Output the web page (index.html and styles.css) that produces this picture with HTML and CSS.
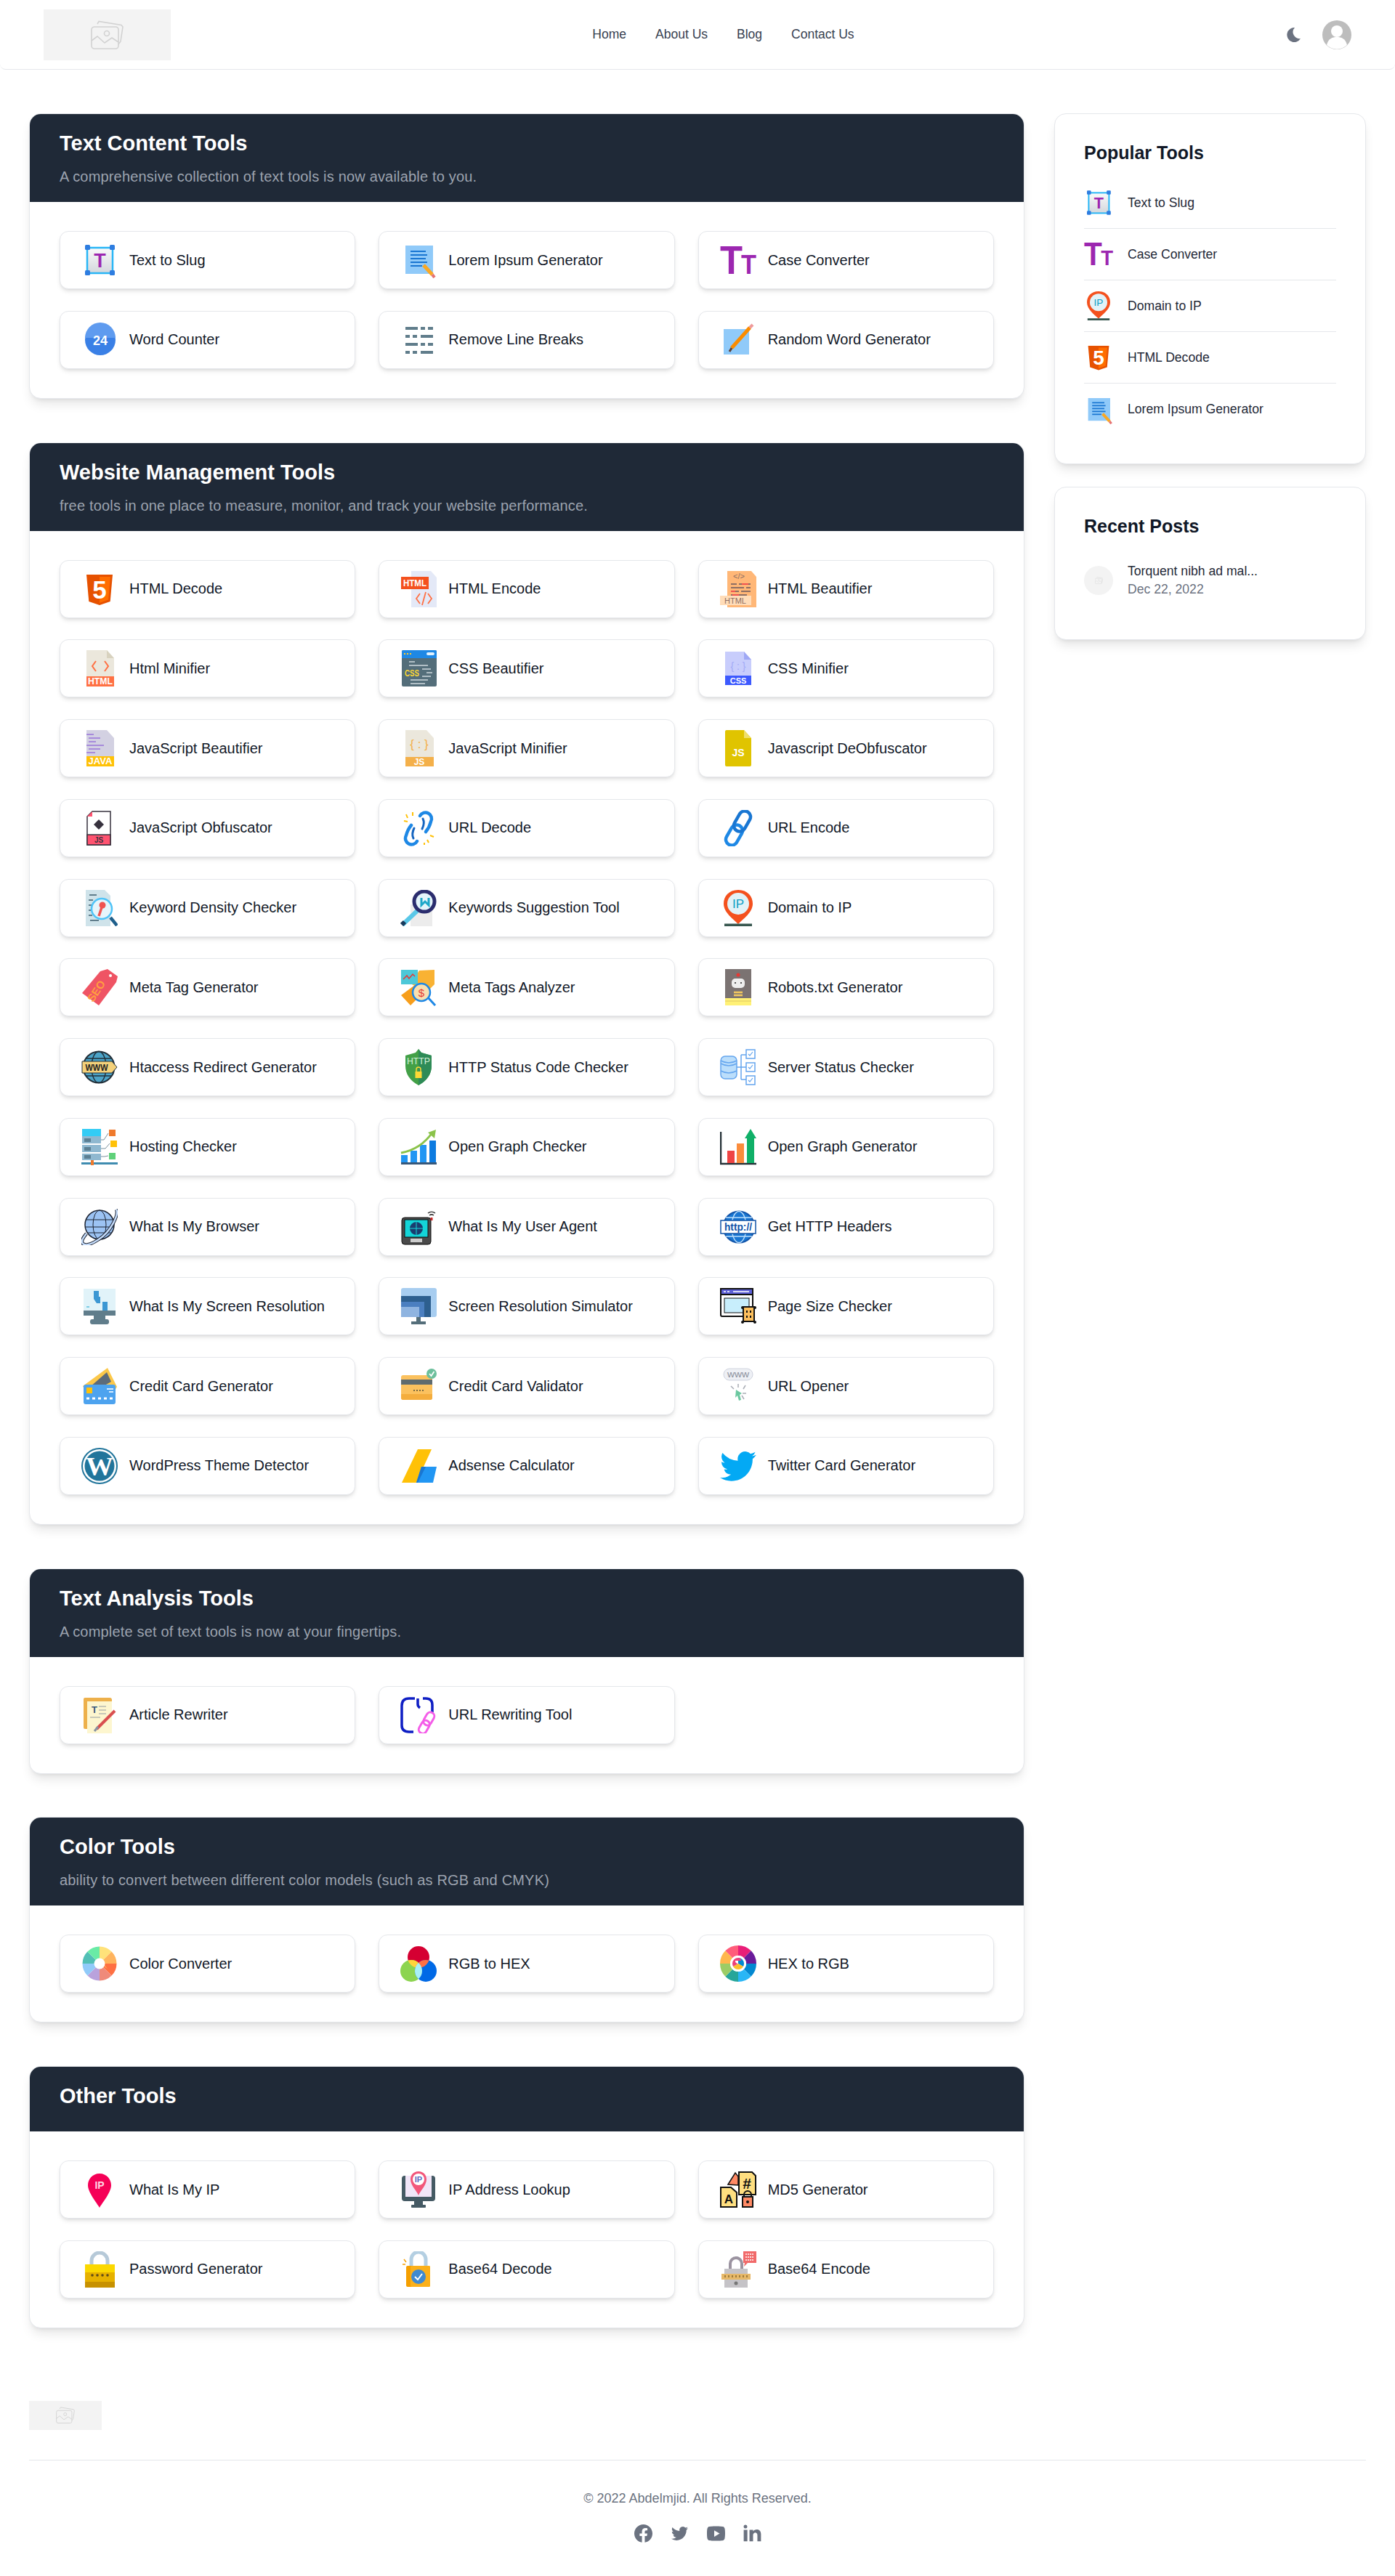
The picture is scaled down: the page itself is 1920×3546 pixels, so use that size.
FILE: index.html
```html
<!DOCTYPE html>
<html lang="en">
<head>
  <meta charset="UTF-8" />
  <title>Online Web Tools</title>
  <link rel="stylesheet" href="styles.css">
</head>
<body>

  <!-- Shared icons (the ones with lettering are written inline below) -->
  <svg class="sprite" aria-hidden="true">
    <defs>
      <linearGradient id="g-slug" x1="0" y1="0" x2="0" y2="1"><stop offset="0" stop-color="#fafafa"/><stop offset="1" stop-color="#d3d7dc"/></linearGradient>
      <clipPath id="c-red"><circle cx="25" cy="16" r="15"/></clipPath>
      <clipPath id="c-green"><circle cx="15" cy="35" r="15"/></clipPath>
    </defs>

    <symbol id="i-photo" viewBox="0 0 45 40">
      <g fill="none" stroke="#d2d2d2" stroke-width="1.6">
        <path d="M9 5 11 1.500 42 6.500 44 9 41 29 38 33"/>
        <rect x="1" y="9" width="37" height="30" rx="4"/>
        <circle cx="22" cy="18" r="3.500"/>
        <path d="M1 28 9 22 19 31 29 24 38 30"/>
      </g>
    </symbol>

    <symbol id="i-lorem" viewBox="0 0 50 50">
      <rect x="7" y="5" width="38" height="39" fill="#90caf9"/>
      <path d="M14 13h21M14 18h23M14 23h21M14 28h23M14 33h16" stroke="#1976d2" stroke-width="2.200"/>
      <path d="M32 32 44 45" stroke="#f9a825" stroke-width="5"/>
      <path d="M44 45 47 49" stroke="#e57373" stroke-width="4"/>
    </symbol>

    <symbol id="i-random" viewBox="0 0 50 50">
      <rect x="5" y="10" width="35" height="35" fill="#90caf9"/>
      <path d="M16 36 41 8" stroke="#fb8c00" stroke-width="5"/>
      <path d="M41 8 45 4" stroke="#ef9a9a" stroke-width="4"/>
      <path d="M16 36 13 41" stroke="#5d4037" stroke-width="3"/>
    </symbol>

    <symbol id="i-breaks" viewBox="0 0 50 50">
      <g fill="#607d8b">
        <rect x="7" y="7" width="17" height="4"/><rect x="28" y="7" width="6" height="4"/><rect x="38" y="7" width="7" height="4"/>
        <rect x="7" y="18" width="6" height="4"/><rect x="17" y="18" width="6" height="4"/><rect x="28" y="18" width="17" height="4"/>
        <rect x="7" y="29" width="17" height="4"/><rect x="28" y="29" width="6" height="4"/><rect x="38" y="29" width="7" height="4"/>
        <rect x="7" y="40" width="6" height="4"/><rect x="17" y="40" width="6" height="4"/><rect x="28" y="40" width="17" height="4"/>
      </g>
    </symbol>

    <symbol id="i-url-dec" viewBox="0 0 50 50">
      <g fill="none" stroke="#1e88e5" stroke-width="4.500" stroke-linecap="round">
        <path d="M27 8a8 8 0 0 1 15 8q-2 8-7 14"/>
        <path d="M23 43a8 8 0 0 1-15-8q2-8 7-14"/>
        <path d="M19 25q-4 8-1 14M30 26q4-8 1-14" stroke="#1565c0" stroke-width="3"/>
      </g>
      <path d="M8 6l2 5M17 3v5M5 15l5 1M41 35l5 2M37 41l2 4M33 45v3" stroke="#ffc107" stroke-width="2"/>
    </symbol>

    <symbol id="i-url-enc" viewBox="0 0 50 50">
      <g fill="none" stroke="#1e88e5" stroke-width="4.500" transform="rotate(-60 25 25)">
        <rect x="-1" y="17" width="30" height="16" rx="8"/>
        <rect x="21" y="17" width="30" height="16" rx="8" stroke="#1976d2"/>
      </g>
    </symbol>

    <symbol id="i-density" viewBox="0 0 50 50">
      <path d="M6 0h26l8 8v42H6z" fill="#cfe3ea"/>
      <path d="M11 7h10M10 14h6M10 21h4M10 28h4M10 35h5M12 42h12" stroke="#607d8b" stroke-width="2"/>
      <circle cx="28" cy="26" r="14" fill="#e6f5fb" stroke="#4fc3f7" stroke-width="2.500"/>
      <circle cx="29" cy="21" r="4.500" fill="#ef5350"/>
      <path d="M28 24 24 36" stroke="#ef5350" stroke-width="3.500"/>
      <path d="M40 38 49 49" stroke="#1f5f8b" stroke-width="4.500"/>
    </symbol>

    <symbol id="i-suggest" viewBox="0 0 50 50">
      <rect x="14" y="20" width="30" height="30" fill="#ececec"/>
      <path d="M24 28 3 48" stroke="#5ac8e8" stroke-width="6"/>
      <path d="M6 44 2 48" stroke="#1a3a5c" stroke-width="6"/>
      <circle cx="33" cy="16" r="14" fill="#e4f4fa" stroke="#2b2d6e" stroke-width="5"/>
      <path d="M29 11v10l5-5 5 5V11" fill="none" stroke="#1ea7c9" stroke-width="3"/>
    </symbol>

    <symbol id="i-robots" viewBox="0 0 50 50">
      <rect x="7" y="0" width="36" height="44" fill="#7b7372"/>
      <path d="M7 40h36v10H7z" fill="#fff176"/>
      <path d="M7 44h36" stroke="#e0c860" stroke-width="1"/>
      <circle cx="25" cy="8" r="2.500" fill="#e53935"/>
      <rect x="16" y="13" width="18" height="13" rx="5" fill="#eeeeee"/>
      <path d="M20 19h2M28 19h2" stroke="#555" stroke-width="2"/>
      <path d="M19 32h12M19 36h12" stroke="#f3c95f" stroke-width="2.500"/>
    </symbol>

    <symbol id="i-server" viewBox="0 0 50 50">
      <g fill="#bbdefb" stroke="#64a5ee" stroke-width="1.500">
        <rect x="1" y="10" width="22" height="31" rx="6"/>
      </g>
      <path d="M1 20q11 6 22 0M1 30q11 6 22 0M1 16q11 6 22 0" fill="none" stroke="#64a5ee" stroke-width="1.500"/>
      <path d="M23 25h6M29 8v34M29 8h7M29 25h7M29 42h7" fill="none" stroke="#64a5ee" stroke-width="1.500"/>
      <g fill="#fff" stroke="#64a5ee" stroke-width="1.500">
        <rect x="36" y="1" width="12" height="12"/><rect x="36" y="19" width="12" height="12"/><rect x="36" y="37" width="12" height="12"/>
      </g>
      <path d="M39 7l2 2 4-5M39 25l2 2 4-5M39 43l2 2 4-5" fill="none" stroke="#64a5ee" stroke-width="1.200"/>
    </symbol>

    <symbol id="i-hosting" viewBox="0 0 50 50">
      <rect x="1" y="0" width="26" height="10" fill="#33ccf5"/>
      <g fill="#8fb8d0"><rect x="1" y="10" width="26" height="10"/><rect x="1" y="22" width="26" height="10"/><rect x="1" y="34" width="26" height="9"/></g>
      <g fill="#5b7f93"><rect x="4" y="13" width="9" height="5"/><rect x="4" y="25" width="9" height="5"/><rect x="4" y="36" width="9" height="5"/></g>
      <rect x="38" y="1" width="9" height="9" fill="#ef7a2d"/>
      <rect x="40" y="16" width="9" height="9" fill="#ffc107"/>
      <rect x="38" y="33" width="9" height="9" fill="#5fd17a"/>
      <path d="M27 15h4l6-9M27 27h6l6-7M27 38h5l5-1" fill="none" stroke="#78909c" stroke-width="1"/>
      <rect x="0" y="46" width="50" height="3" fill="#3f8cb0"/>
      <rect x="13" y="43" width="4" height="7" fill="#ef7a2d"/>
    </symbol>

    <symbol id="i-og-check" viewBox="0 0 50 50">
      <rect x="1" y="36" width="9" height="11" fill="#2196f3"/>
      <rect x="14" y="30" width="9" height="17" fill="#2196f3"/>
      <rect x="27" y="22" width="9" height="25" fill="#2196f3"/>
      <rect x="40" y="16" width="9" height="31" fill="#0d7be0"/>
      <rect x="1" y="46" width="49" height="3" fill="#37587a"/>
      <path d="M1 33Q28 28 44 5" fill="none" stroke="#8bc34a" stroke-width="3"/>
      <path d="M38 5 49 1 47 13z" fill="#8bc34a"/>
    </symbol>

    <symbol id="i-og-gen" viewBox="0 0 50 50">
      <path d="M1 4v44h49" fill="none" stroke="#263238" stroke-width="2.500"/>
      <rect x="10" y="30" width="10" height="17" fill="#ef4444"/>
      <rect x="23" y="20" width="10" height="27" fill="#fb8c3c"/>
      <rect x="37" y="12" width="10" height="35" fill="#10b068"/>
      <path d="M42 0l8 13H34z" fill="#10b068"/>
    </symbol>

    <symbol id="i-browser" viewBox="0 0 50 50">
      <circle cx="25" cy="22" r="20" fill="#9cc3f3" stroke="#1d2433" stroke-width="1.500"/>
      <ellipse cx="25" cy="22" rx="9" ry="20" fill="none" stroke="#1d2433"/>
      <path d="M6 15h38M5 25h40M8 33h34" stroke="#1d2433"/>
      <path d="M48 1C52 8 40 32 24 42 12 50 3 52 1 46c-1-3 2-7 6-12" fill="none" stroke="#1d2433" stroke-width="4.500"/>
      <path d="M48 1C52 8 40 32 24 42 12 50 3 52 1 46c-1-3 2-7 6-12" fill="none" stroke="#c5dcfa" stroke-width="2.500"/>
    </symbol>

    <symbol id="i-ua" viewBox="0 0 50 50">
      <rect x="2" y="12" width="40" height="37" rx="4" fill="#4a4a4a" stroke="#111"/>
      <rect x="6" y="15" width="32" height="24" fill="#14d5d8" stroke="#111"/>
      <circle cx="22" cy="27" r="9" fill="#1a3d6e"/>
      <path d="M13 27h18M22 18v18" stroke="#14d5d8"/>
      <rect x="14" y="41" width="16" height="5" fill="#ccc"/>
      <path d="M38 6a8 8 0 0 1 10 0M40 9a5 5 0 0 1 6 0" fill="none" stroke="#333" stroke-width="1.500"/>
      <path d="M43 12v4" stroke="#c62828" stroke-width="3"/>
    </symbol>

    <symbol id="i-res" viewBox="0 0 50 50">
      <rect x="3" y="1" width="44" height="30" fill="#e1f3f9"/>
      <path d="M17 4h7v8h2v9h-5l-4-6z" fill="#3c97d3"/>
      <path d="M29 19h7v12h-7z" fill="#3c97d3"/>
      <path d="M7 26h4" stroke="#5bc0de" stroke-width="1.500"/>
      <rect x="3" y="31" width="44" height="7" fill="#607d8b"/>
      <rect x="17" y="38" width="16" height="5" fill="#607d8b"/>
      <rect x="12" y="43" width="26" height="7" rx="3" fill="#607d8b"/>
    </symbol>

    <symbol id="i-sim" viewBox="0 0 50 50">
      <rect x="1" y="0" width="49" height="40" rx="3" fill="#a7cdf0"/>
      <rect x="1" y="11" width="41" height="29" fill="#2d5f8f"/>
      <rect x="1" y="19" width="32" height="21" fill="#4b7fc0"/>
      <rect x="1" y="26" width="25" height="14" fill="#8fb4e0"/>
      <rect x="22" y="40" width="6" height="6" fill="#546e7a"/>
      <rect x="15" y="46" width="20" height="4" fill="#546e7a"/>
    </symbol>

    <symbol id="i-pagesize" viewBox="0 0 50 50">
      <rect x="1" y="1" width="44" height="38" rx="2" fill="#fff" stroke="#111" stroke-width="2"/>
      <rect x="1" y="1" width="44" height="8" fill="#5c5fd6" stroke="#111" stroke-width="2"/>
      <path d="M5 5h3M10 5h3M18 5h22" stroke="#fff" stroke-width="1.500"/>
      <rect x="6" y="14" width="34" height="20" fill="#c8eefc" stroke="#111"/>
      <rect x="32" y="26" width="15" height="20" fill="#fbbf5d" stroke="#111" stroke-width="2"/>
      <path d="M37 31v3M42 31v3M37 38v3M42 38v3" stroke="#111" stroke-width="2"/>
      <g fill="#111"><circle cx="31" cy="27" r="2"/><circle cx="48" cy="27" r="2"/><circle cx="31" cy="47" r="2"/><circle cx="48" cy="47" r="2"/></g>
    </symbol>

    <symbol id="i-cc-gen" viewBox="0 0 50 50">
      <path d="M2 25 36 0l13 26-3 5H5z" fill="#fcc84a"/>
      <path d="M12 26 35 6l6 13-16 9z" fill="#5d6b7a"/>
      <rect x="3" y="23" width="44" height="27" rx="3" fill="#4da3ef"/>
      <rect x="7" y="27" width="8" height="8" fill="#ffc107"/>
      <path d="M35 29h9M38 33h6" stroke="#d6ecff" stroke-width="2"/>
      <path d="M7 42h4M15 42h4M23 42h4M31 42h4M39 42h4" stroke="#fff" stroke-width="3"/>
    </symbol>

    <symbol id="i-cc-val" viewBox="0 0 50 50">
      <rect x="1" y="10" width="43" height="34" rx="3" fill="#fbc15e"/>
      <rect x="1" y="16" width="43" height="7" fill="#5f6b6e"/>
      <path d="M1 36h43v5q0 3-3 3H4q-3 0-3-3z" fill="#f4ad3d"/>
      <path d="M18 31h2M22 31h2M26 31h2M30 31h2" stroke="#7b6a40" stroke-width="2"/>
      <circle cx="43" cy="8" r="7" fill="#6cbf9c"/>
      <path d="M40 8l2.500 3 4-6" fill="none" stroke="#fff" stroke-width="1.800"/>
    </symbol>

    <symbol id="i-adsense" viewBox="0 0 50 50">
      <path d="M24 2h19L22 48H2z" fill="#ffc107"/>
      <path d="M29 26h21l-5 22H22z" fill="#2196f3"/>
      <path d="M29 26h6L24 48h-2z" fill="#1976d2"/>
    </symbol>

    <symbol id="i-twitter" viewBox="0 0 50 50">
      <path transform="translate(-4.400 -4) scale(2.450)" fill="#03a9f4" d="M22.162 5.656a8.384 8.384 0 0 1-2.402.658A4.196 4.196 0 0 0 21.6 4c-.82.488-1.719.83-2.656 1.015a4.182 4.182 0 0 0-7.126 3.814 11.874 11.874 0 0 1-8.62-4.37 4.168 4.168 0 0 0-.566 2.103c0 1.45.738 2.731 1.86 3.481a4.168 4.168 0 0 1-1.894-.523v.052a4.185 4.185 0 0 0 3.355 4.101 4.21 4.21 0 0 1-1.89.072A4.185 4.185 0 0 0 7.970 16.650a8.394 8.394 0 0 1-6.191 1.732 11.830 11.830 0 0 0 6.410 1.880c7.693 0 11.900-6.373 11.900-11.900 0-.180-.005-.362-.013-.540a8.496 8.496 0 0 0 2.087-2.165z"/>
    </symbol>

    <symbol id="i-url-rw" viewBox="0 0 50 50">
      <path d="M20 2h-8Q2 2 2 12v27q0 9 10 9h6M31 2h4q9 0 9 9v10M24 2v8q0 3 3 5" fill="none" stroke="#0e1ec4" stroke-width="3.500"/>
      <g fill="none" stroke="#f45de8" stroke-width="3" transform="rotate(-60 37 35)">
        <rect x="20" y="29" width="19" height="11" rx="5.500"/>
        <rect x="33" y="29" width="19" height="11" rx="5.500"/>
      </g>
    </symbol>

    <symbol id="i-color" viewBox="0 0 50 50">
      <g fill="none" stroke-width="16">
        <circle cx="25" cy="25" r="15.500" pathLength="8" stroke="#ff7043" stroke-dasharray="1 7"/>
        <circle cx="25" cy="25" r="15.500" pathLength="8" stroke="#ef8a7a" stroke-dasharray="1 7" stroke-dashoffset="-1"/>
        <circle cx="25" cy="25" r="15.500" pathLength="8" stroke="#b9a2dc" stroke-dasharray="1 7" stroke-dashoffset="-2"/>
        <circle cx="25" cy="25" r="15.500" pathLength="8" stroke="#90caf9" stroke-dasharray="1 7" stroke-dashoffset="-3"/>
        <circle cx="25" cy="25" r="15.500" pathLength="8" stroke="#52bfb5" stroke-dasharray="1 7" stroke-dashoffset="-4"/>
        <circle cx="25" cy="25" r="15.500" pathLength="8" stroke="#69eba6" stroke-dasharray="1 7" stroke-dashoffset="-5"/>
        <circle cx="25" cy="25" r="15.500" pathLength="8" stroke="#ffe27a" stroke-dasharray="1 7" stroke-dashoffset="-6"/>
        <circle cx="25" cy="25" r="15.500" pathLength="8" stroke="#ffb45e" stroke-dasharray="1 7" stroke-dashoffset="-7"/>
      </g>
    </symbol>

    <symbol id="i-rgb" viewBox="0 0 50 50">
      <circle cx="25" cy="16" r="15" fill="#d50032"/>
      <circle cx="15" cy="35" r="15" fill="#8cd44f"/>
      <circle cx="35" cy="35" r="15" fill="#0069e6"/>
      <circle cx="15" cy="35" r="15" fill="#ffd43b" clip-path="url(#c-red)"/>
      <circle cx="35" cy="35" r="15" fill="#ff7043" clip-path="url(#c-red)"/>
      <circle cx="35" cy="35" r="15" fill="#a8f0f5" clip-path="url(#c-green)"/>
    </symbol>

    <symbol id="i-hex" viewBox="0 0 50 50">
      <g fill="none" stroke-width="14">
        <circle cx="25" cy="25" r="18" pathLength="8" stroke="#0288d1" stroke-dasharray="1 7"/>
        <circle cx="25" cy="25" r="18" pathLength="8" stroke="#29b6f6" stroke-dasharray="1 7" stroke-dashoffset="-1"/>
        <circle cx="25" cy="25" r="18" pathLength="8" stroke="#26a69a" stroke-dasharray="1 7" stroke-dashoffset="-2"/>
        <circle cx="25" cy="25" r="18" pathLength="8" stroke="#9ccc65" stroke-dasharray="1 7" stroke-dashoffset="-3"/>
        <circle cx="25" cy="25" r="18" pathLength="8" stroke="#ffb74d" stroke-dasharray="1 7" stroke-dashoffset="-4"/>
        <circle cx="25" cy="25" r="18" pathLength="8" stroke="#ff5c7a" stroke-dasharray="1 7" stroke-dashoffset="-5"/>
        <circle cx="25" cy="25" r="18" pathLength="8" stroke="#e91e78" stroke-dasharray="1 7" stroke-dashoffset="-6"/>
        <circle cx="25" cy="25" r="18" pathLength="8" stroke="#6a1b9a" stroke-dasharray="1 7" stroke-dashoffset="-7"/>
      </g>
      <circle cx="25" cy="25" r="11" fill="#fff"/>
      <g fill="none" stroke-width="8">
        <circle cx="25" cy="25" r="4" pathLength="3" stroke="#0288d1" stroke-dasharray="1 2" stroke-dashoffset="0.750"/>
        <circle cx="25" cy="25" r="4" pathLength="3" stroke="#fbc02d" stroke-dasharray="1 2" stroke-dashoffset="-0.250"/>
        <circle cx="25" cy="25" r="4" pathLength="3" stroke="#ec407a" stroke-dasharray="1 2" stroke-dashoffset="-1.250"/>
      </g>
    </symbol>

    <symbol id="i-pass" viewBox="0 0 50 50">
      <path d="M14 20V13a11 11 0 0 1 22 0v7" fill="none" stroke="#b6c9d8" stroke-width="5"/>
      <rect x="5" y="18" width="41" height="32" fill="#e6b100"/>
      <rect x="5" y="18" width="41" height="11" fill="#fbd800"/>
      <rect x="5" y="42" width="41" height="8" fill="#c79100"/>
      <g fill="#5d4a17"><circle cx="15" cy="33" r="1.800"/><circle cx="22" cy="33" r="1.800"/><circle cx="29" cy="33" r="1.800"/><circle cx="36" cy="33" r="1.800"/></g>
    </symbol>

    <symbol id="i-b64d" viewBox="0 0 50 50">
      <path d="M15 20V11a10 10 0 0 1 20 0v12" fill="none" stroke="#b4cfe2" stroke-width="5"/>
      <rect x="8" y="20" width="33" height="29" rx="2" fill="#f59f00"/>
      <rect x="14" y="20" width="27" height="29" rx="2" fill="#fbb01a"/>
      <circle cx="25" cy="35" r="10" fill="#3f8ad0"/>
      <path d="M20 35l4 4 6-8" fill="none" stroke="#fff" stroke-width="2"/>
      <path d="M5 11l3 4M3 18h4" stroke="#f59f00" stroke-width="1.500"/>
    </symbol>

    <symbol id="i-b64e" viewBox="0 0 50 50">
      <path d="M14 25V17a8 8 0 0 1 16 0v8" fill="none" stroke="#9b93a0" stroke-width="4"/>
      <rect x="6" y="24" width="32" height="26" fill="#c5c3c7"/>
      <rect x="2" y="31" width="40" height="8" fill="#e6b86a"/>
      <path d="M7 33v3M12 33v3M17 33v3M22 33v3M27 33v3M32 33v3M37 33v3" stroke="#8a6a2d" stroke-width="1.500"/>
      <circle cx="22" cy="44" r="2.500" fill="#777"/>
      <path d="M32 0h18v16H38l-5 5 1-5h-2z" fill="#f16a6a"/>
      <path d="M35 4h12M35 8h12M35 12h12" stroke="#fff" stroke-width="1.500" stroke-dasharray="2 1"/>
    </symbol>
  </svg>

  <!-- Top bar -->
  <header class="topbar">
    <a href="#" class="logo"><svg class="logo-img"><use href="#i-photo"/></svg></a>
    <nav class="topnav">
      <a href="#">Home</a>
      <a href="#">About Us</a>
      <a href="#">Blog</a>
      <a href="#">Contact Us</a>
    </nav>
    <div class="top-actions">
      <svg class="moon" viewBox="0 0 20 20"><path d="M12 0A10 10 0 1 0 20 15 9 9 0 0 1 12 0z"/></svg>
      <svg class="avatar" viewBox="0 0 40 40">
        <circle cx="20" cy="20" r="20" fill="#bdbdbd"/>
        <circle cx="20" cy="15" r="8" fill="#fff"/>
        <path d="M6 34c2-9 8-11 14-11s12 2 14 11a20 20 0 0 1-28 0z" fill="#fff"/>
      </svg>
    </div>
  </header>

  <div class="page">

    <main class="main-col">

      <!-- Text Content Tools -->
      <section class="tool-section">
        <div class="section-head">
          <h2>Text Content Tools</h2>
          <p>A comprehensive collection of text tools is now available to you.</p>
        </div>
        <div class="tool-grid">
          <a href="#" class="tool">
            <svg class="tool-icon" viewBox="0 0 50 50">
              <rect x="8" y="8" width="35" height="35" fill="url(#g-slug)" stroke="#29b6f6" stroke-width="2.500"/>
              <g fill="#2e7de0"><rect x="5" y="4" width="7" height="7" rx="1.500"/><rect x="39" y="4" width="7" height="7" rx="1.500"/><rect x="5" y="39" width="7" height="7" rx="1.500"/><rect x="39" y="39" width="7" height="7" rx="1.500"/></g>
              <text x="25.500" y="35" text-anchor="middle" font-size="27" font-weight="700" fill="#9c27b0">T</text>
            </svg>
            <span>Text to Slug</span>
          </a>
          <a href="#" class="tool"><svg class="tool-icon"><use href="#i-lorem"/></svg><span>Lorem Ipsum Generator</span></a>
          <a href="#" class="tool">
            <svg class="tool-icon" viewBox="0 0 50 50">
              <text x="0" y="44" font-size="56" font-weight="700" fill="#9c27b0" textLength="31" lengthAdjust="spacingAndGlyphs">T</text>
              <text x="29" y="44" font-size="36" font-weight="700" fill="#9c27b0" textLength="21" lengthAdjust="spacingAndGlyphs">T</text>
            </svg>
            <span>Case Converter</span>
          </a>
          <a href="#" class="tool">
            <svg class="tool-icon" viewBox="0 0 50 50">
              <circle cx="26" cy="25" r="21" fill="#3a80e6"/>
              <path d="M5 22a21 21 0 0 1 42 0z" fill="#5f9bef"/>
              <text x="26" y="32" text-anchor="middle" font-size="19" font-weight="700" fill="#fff" textLength="20" lengthAdjust="spacingAndGlyphs">24</text>
            </svg>
            <span>Word Counter</span>
          </a>
          <a href="#" class="tool"><svg class="tool-icon"><use href="#i-breaks"/></svg><span>Remove Line Breaks</span></a>
          <a href="#" class="tool"><svg class="tool-icon"><use href="#i-random"/></svg><span>Random Word Generator</span></a>
        </div>
      </section>

      <!-- Website Management Tools -->
      <section class="tool-section">
        <div class="section-head">
          <h2>Website Management Tools</h2>
          <p>free tools in one place to measure, monitor, and track your website performance.</p>
        </div>
        <div class="tool-grid">
          <a href="#" class="tool">
            <svg class="tool-icon" viewBox="0 0 50 50">
              <path d="M7 5h36l-3.300 37L25 47l-14.700-5z" fill="#e65100"/>
              <path d="M25 8h15l-2.800 31.500L25 44z" fill="#ff6d00"/>
              <text x="25" y="38" text-anchor="middle" font-size="35" font-weight="700" fill="#fff">5</text>
            </svg>
            <span>HTML Decode</span>
          </a>
          <a href="#" class="tool">
            <svg class="tool-icon" viewBox="0 0 50 50">
              <path d="M15 0h27l8 9v41H15z" fill="#e4e9f7"/>
              <rect x="1" y="8" width="38" height="17" fill="#f4511e"/>
              <text x="20" y="21" text-anchor="middle" font-size="12" font-weight="700" fill="#fff" textLength="32" lengthAdjust="spacingAndGlyphs">HTML</text>
              <path d="M27 31l-5 7 5 7M38 31l5 7-5 7M35 29l-5 18" fill="none" stroke="#ff7043" stroke-width="1.800"/>
            </svg>
            <span>HTML Encode</span>
          </a>
          <a href="#" class="tool">
            <svg class="tool-icon" viewBox="0 0 50 50">
              <path d="M10 0h33l7 8v42H10z" fill="#ffb777"/>
              <path d="M15 18h8M26 18h16M15 23h18M36 23h6M17 28h9M29 28h13M15 33h22" stroke="#8d6e63" stroke-width="2"/>
              <path d="M15 28h6M30 18h9M17 33h9" stroke="#ef5350" stroke-width="2"/>
              <text x="26" y="11" text-anchor="middle" font-size="11" fill="#8d6e63">&lt;/&gt;</text>
              <rect x="0" y="34" width="43" height="13" fill="#ffdcb8"/>
              <text x="21" y="44.500" text-anchor="middle" font-size="10" fill="#8d6e63" textLength="30" lengthAdjust="spacingAndGlyphs">HTML</text>
            </svg>
            <span>HTML Beautifier</span>
          </a>
          <a href="#" class="tool">
            <svg class="tool-icon" viewBox="0 0 50 50">
              <path d="M7 0h28l10 11v39H7z" fill="#ebe7dc"/>
              <path d="M35 0l10 11H35z" fill="#d8d2bf"/>
              <path d="M7 36h38v14H7z" fill="#ff7043"/>
              <path d="M20 15l-5 7 5 7M32 15l5 7-5 7" fill="none" stroke="#ff7043" stroke-width="2"/>
              <text x="26" y="47" text-anchor="middle" font-size="12" font-weight="700" fill="#fff" textLength="34" lengthAdjust="spacingAndGlyphs">HTML</text>
            </svg>
            <span>Html Minifier</span>
          </a>
          <a href="#" class="tool">
            <svg class="tool-icon" viewBox="0 0 50 50">
              <rect x="2" y="0" width="48" height="50" rx="2" fill="#546e7a"/>
              <path d="M2 2q0-2 2-2h44q2 0 2 2v9H2z" fill="#1e88e5"/>
              <path d="M5 5h2M9 5h2M13 5h2" stroke="#ffca28" stroke-width="2"/>
              <rect x="36" y="3" width="11" height="4" rx="2" fill="#e3f2fd"/>
              <path d="M12 16h8M12 21h26M30 26h12M36 31h8M30 36h12M14 41h24M14 46h20" stroke="#b0bec5" stroke-width="2"/>
              <text x="6" y="36" font-size="13" font-weight="700" fill="#fdd835" textLength="20" lengthAdjust="spacingAndGlyphs">CSS</text>
            </svg>
            <span>CSS Beautifier</span>
          </a>
          <a href="#" class="tool">
            <svg class="tool-icon" viewBox="0 0 50 50">
              <path d="M7 2h26l10 11v35H7z" fill="#c8cdfc"/>
              <path d="M33 2l10 11H33z" fill="#9fa8f5"/>
              <path d="M7 35h36v13H7z" fill="#3d5afe"/>
              <text x="25" y="27" text-anchor="middle" font-size="14" fill="#a3abf7">{ : }</text>
              <text x="25" y="46" text-anchor="middle" font-size="11" font-weight="700" fill="#fff">CSS</text>
            </svg>
            <span>CSS Minifier</span>
          </a>
          <a href="#" class="tool">
            <svg class="tool-icon" viewBox="0 0 50 50">
              <path d="M7 0h28l10 11v39H7z" fill="#d3d1e2"/>
              <path d="M7 6h10M10 11h16M10 16h10M7 21h24M10 26h16M7 31h12" stroke="#a78bdb" stroke-width="2.200"/>
              <path d="M7 36h38v14H7z" fill="#ffc107"/>
              <text x="26" y="47" text-anchor="middle" font-size="12" font-weight="700" fill="#fff" textLength="33" lengthAdjust="spacingAndGlyphs">JAVA</text>
            </svg>
            <span>JavaScript Beautifier</span>
          </a>
          <a href="#" class="tool">
            <svg class="tool-icon" viewBox="0 0 50 50">
              <path d="M7 0h29l10 11v39H7z" fill="#ebe7dc"/>
              <path d="M7 37h39v13H7z" fill="#f4b04a"/>
              <text x="26" y="25" text-anchor="middle" font-size="17" fill="#f4b04a">{ : }</text>
              <text x="26" y="47.500" text-anchor="middle" font-size="12" font-weight="700" fill="#fff">JS</text>
            </svg>
            <span>JavaScript Minifier</span>
          </a>
          <a href="#" class="tool">
            <svg class="tool-icon" viewBox="0 0 50 50">
              <path d="M9 0h24l10 11v37q0 2-2 2H9q-2 0-2-2V2q0-2 2-2z" fill="#e0c400"/>
              <path d="M33 0l10 11H33z" fill="#efdf6a"/>
              <text x="25" y="36" text-anchor="middle" font-size="14" font-weight="700" fill="#fff">JS</text>
            </svg>
            <span>Javascript DeObfuscator</span>
          </a>
          <a href="#" class="tool">
            <svg class="tool-icon" viewBox="0 0 50 50">
              <path d="M15 2h25v46H8V9z" fill="#fff" stroke="#37323e" stroke-width="1.500"/>
              <path d="M8 9h7V2z" fill="#ff5370"/>
              <path d="M8 34h32v14H8z" fill="#ff5370" stroke="#37323e" stroke-width="1.500"/>
              <path d="M24 13l7 7-7 7-7-7z" fill="#37323e"/>
              <text x="24" y="45" text-anchor="middle" font-size="10" font-weight="700" fill="#37323e">JS</text>
            </svg>
            <span>JavaScript Obfuscator</span>
          </a>
          <a href="#" class="tool"><svg class="tool-icon"><use href="#i-url-dec"/></svg><span>URL Decode</span></a>
          <a href="#" class="tool"><svg class="tool-icon"><use href="#i-url-enc"/></svg><span>URL Encode</span></a>
          <a href="#" class="tool"><svg class="tool-icon"><use href="#i-density"/></svg><span>Keyword Density Checker</span></a>
          <a href="#" class="tool"><svg class="tool-icon"><use href="#i-suggest"/></svg><span>Keywords Suggestion Tool</span></a>
          <a href="#" class="tool">
            <svg class="tool-icon" viewBox="0 0 50 50">
              <path d="M25 0C12 0 5 9 5 19c0 12 13 21 20 28 7-7 20-16 20-28C45 9 38 0 25 0z" fill="#f4511e"/>
              <circle cx="25" cy="19" r="15" fill="#e2f2f7"/>
              <text x="25" y="25" text-anchor="middle" font-size="17" fill="#0e9fc4">IP</text>
              <rect x="6" y="46.500" width="38" height="3.500" fill="#37574f"/>
            </svg>
            <span>Domain to IP</span>
          </a>
          <a href="#" class="tool">
            <svg class="tool-icon" viewBox="0 0 50 50">
              <path d="M36 0l14 10-2 8L24 50 1 33 26 3z" fill="#ef5464"/>
              <circle cx="40" cy="9" r="2" fill="#fff"/>
              <text x="0" y="0" transform="translate(25 33) rotate(-57)" text-anchor="middle" font-size="15" font-weight="700" fill="#ff9e40">SEO</text>
            </svg>
            <span>Meta Tag Generator</span>
          </a>
          <a href="#" class="tool">
            <svg class="tool-icon" viewBox="0 0 50 50">
              <path d="M26 2 47 1v20L36 32 14 20z" fill="#f9b233"/>
              <path d="M20 22 32 32 14 50 1 36z" fill="#f79e1b"/>
              <rect x="1" y="1" width="23" height="20" fill="#4dc8d8"/>
              <path d="M4 14l5-5 3 4 5-6 3 3" fill="none" stroke="#e53935" stroke-width="1.500"/>
              <path d="M37 38 48 50" stroke="#1e88e5" stroke-width="3"/>
              <circle cx="29" cy="32" r="12" fill="#f9e0b0" stroke="#1e88e5" stroke-width="2.500"/>
              <text x="29" y="38" text-anchor="middle" font-size="15" fill="#e53935">$</text>
            </svg>
            <span>Meta Tags Analyzer</span>
          </a>
          <a href="#" class="tool"><svg class="tool-icon"><use href="#i-robots"/></svg><span>Robots.txt Generator</span></a>
          <a href="#" class="tool">
            <svg class="tool-icon" viewBox="0 0 50 50">
              <circle cx="24" cy="25" r="21.500" fill="#4ba3c7" stroke="#22303a" stroke-width="2"/>
              <ellipse cx="24" cy="25" rx="10" ry="21.500" fill="none" stroke="#22303a" stroke-width="1.500"/>
              <path d="M6 13h36M6 37h36" stroke="#22303a" stroke-width="1.500"/>
              <path d="M1 17h41l7 8-7 8H1z" fill="#f4d17a" stroke="#22303a"/>
              <text x="21" y="30" text-anchor="middle" font-size="13" font-weight="700" fill="#222" textLength="31" lengthAdjust="spacingAndGlyphs">WWW</text>
            </svg>
            <span>Htaccess Redirect Generator</span>
          </a>
          <a href="#" class="tool">
            <svg class="tool-icon" viewBox="0 0 50 50">
              <path d="M25 0 29 5 43 9v14q0 17-18 27Q7 40 7 23V9L21 5z" fill="#43a047"/>
              <path d="M25 0 29 5 43 9v14q0 17-18 27z" fill="#2e8b57"/>
              <text x="25" y="21" text-anchor="middle" font-size="13" fill="#d5f2db" textLength="32" lengthAdjust="spacingAndGlyphs">HTTP</text>
              <rect x="20.500" y="31" width="9" height="9" fill="#fdd835"/>
              <path d="M22 31v-3a3 3 0 0 1 6 0v3" fill="none" stroke="#fdd835" stroke-width="1.500"/>
            </svg>
            <span>HTTP Status Code Checker</span>
          </a>
          <a href="#" class="tool"><svg class="tool-icon"><use href="#i-server"/></svg><span>Server Status Checker</span></a>
          <a href="#" class="tool"><svg class="tool-icon"><use href="#i-hosting"/></svg><span>Hosting Checker</span></a>
          <a href="#" class="tool"><svg class="tool-icon"><use href="#i-og-check"/></svg><span>Open Graph Checker</span></a>
          <a href="#" class="tool"><svg class="tool-icon"><use href="#i-og-gen"/></svg><span>Open Graph Generator</span></a>
          <a href="#" class="tool"><svg class="tool-icon"><use href="#i-browser"/></svg><span>What Is My Browser</span></a>
          <a href="#" class="tool"><svg class="tool-icon"><use href="#i-ua"/></svg><span>What Is My User Agent</span></a>
          <a href="#" class="tool">
            <svg class="tool-icon" viewBox="0 0 50 50">
              <circle cx="26" cy="25" r="21.500" fill="#1976d2" stroke="#1254a8" stroke-width="2"/>
              <ellipse cx="26" cy="25" rx="10" ry="21.500" fill="none" stroke="#bbdefb" stroke-width="1.500"/>
              <path d="M8 12h36M8 38h36" stroke="#bbdefb" stroke-width="1.500"/>
              <rect x="1" y="16" width="48" height="18" fill="#fff" stroke="#1254a8" stroke-width="1.500"/>
              <text x="25" y="30" text-anchor="middle" font-size="14" font-weight="700" fill="#1254a8" textLength="38" lengthAdjust="spacingAndGlyphs">http://</text>
            </svg>
            <span>Get HTTP Headers</span>
          </a>
          <a href="#" class="tool"><svg class="tool-icon"><use href="#i-res"/></svg><span>What Is My Screen Resolution</span></a>
          <a href="#" class="tool"><svg class="tool-icon"><use href="#i-sim"/></svg><span>Screen Resolution Simulator</span></a>
          <a href="#" class="tool"><svg class="tool-icon"><use href="#i-pagesize"/></svg><span>Page Size Checker</span></a>
          <a href="#" class="tool"><svg class="tool-icon"><use href="#i-cc-gen"/></svg><span>Credit Card Generator</span></a>
          <a href="#" class="tool"><svg class="tool-icon"><use href="#i-cc-val"/></svg><span>Credit Card Validator</span></a>
          <a href="#" class="tool">
            <svg class="tool-icon" viewBox="0 0 50 50">
              <rect x="5" y="1" width="40" height="16" rx="8" fill="#eef0f5" stroke="#cfd3de"/>
              <text x="25" y="13" text-anchor="middle" font-size="12" fill="#8a8f9c" textLength="30" lengthAdjust="spacingAndGlyphs">www</text>
              <path d="M25 22v5M35 24l-3 5M15 25l4 4M36 35h-5M33 43l-3-5" stroke="#a9adb5" stroke-width="1.500"/>
              <path d="M22 30l8 5-3 2 2 7-3 1-2-7-3 3z" fill="#6cc8a0"/>
            </svg>
            <span>URL Opener</span>
          </a>
          <a href="#" class="tool">
            <svg class="tool-icon" viewBox="0 0 50 50">
              <circle cx="25" cy="25" r="24" fill="#fff" stroke="#21759b" stroke-width="2"/>
              <circle cx="25" cy="25" r="20.500" fill="#21759b"/>
              <text x="25" y="38" text-anchor="middle" font-family="Liberation Serif" font-size="36" font-weight="700" fill="#fff" textLength="38" lengthAdjust="spacingAndGlyphs">W</text>
            </svg>
            <span>WordPress Theme Detector</span>
          </a>
          <a href="#" class="tool"><svg class="tool-icon"><use href="#i-adsense"/></svg><span>Adsense Calculator</span></a>
          <a href="#" class="tool"><svg class="tool-icon"><use href="#i-twitter"/></svg><span>Twitter Card Generator</span></a>
        </div>
      </section>

      <!-- Text Analysis Tools -->
      <section class="tool-section">
        <div class="section-head">
          <h2>Text Analysis Tools</h2>
          <p>A complete set of text tools is now at your fingertips.</p>
        </div>
        <div class="tool-grid">
          <a href="#" class="tool">
            <svg class="tool-icon" viewBox="0 0 50 50">
              <path d="M3 3q0-2 2-2h34q3 0 3 3v40H5q-2 0-2-2z" fill="#edb04b"/>
              <rect x="8" y="6" width="34" height="44" fill="#fdf6cf"/>
              <text x="14" y="22" font-size="13" font-weight="700" fill="#37587a">T</text>
              <path d="M24 13h10M24 18h10M24 23h10M12 28h14" stroke="#c8c8b8" stroke-width="2"/>
              <path d="M46 19 21 44" stroke="#d94f4f" stroke-width="4"/>
              <path d="M23 41 18 47" stroke="#8892a0" stroke-width="3"/>
            </svg>
            <span>Article Rewriter</span>
          </a>
          <a href="#" class="tool"><svg class="tool-icon"><use href="#i-url-rw"/></svg><span>URL Rewriting Tool</span></a>
        </div>
      </section>

      <!-- Color Tools -->
      <section class="tool-section">
        <div class="section-head">
          <h2>Color Tools</h2>
          <p>ability to convert between different color models (such as RGB and CMYK)</p>
        </div>
        <div class="tool-grid">
          <a href="#" class="tool"><svg class="tool-icon"><use href="#i-color"/></svg><span>Color Converter</span></a>
          <a href="#" class="tool"><svg class="tool-icon"><use href="#i-rgb"/></svg><span>RGB to HEX</span></a>
          <a href="#" class="tool"><svg class="tool-icon"><use href="#i-hex"/></svg><span>HEX to RGB</span></a>
        </div>
      </section>

      <!-- Other Tools -->
      <section class="tool-section">
        <div class="section-head section-head-plain">
          <h2>Other Tools</h2>
        </div>
        <div class="tool-grid">
          <a href="#" class="tool">
            <svg class="tool-icon" viewBox="0 0 50 50">
              <path d="M25 3C15 3 9 11 9 19c0 10 12 24 16 31 4-7 16-21 16-31C41 11 35 3 25 3z" fill="#f50057"/>
              <text x="25" y="24" text-anchor="middle" font-size="14" font-weight="700" fill="#ffd6e4">IP</text>
            </svg>
            <span>What Is My IP</span>
          </a>
          <a href="#" class="tool">
            <svg class="tool-icon" viewBox="0 0 50 50">
              <path d="M2 10q0-4 4-4h38q4 0 4 4v27q0 4-4 4H6q-4 0-4-4z" fill="#455a64"/>
              <rect x="7" y="6" width="36" height="29" fill="#f1e6f8"/>
              <rect x="19" y="41" width="12" height="6" fill="#455a64"/>
              <rect x="15" y="46" width="20" height="4" rx="1" fill="#455a64"/>
              <path d="M25 0c-7 0-11 5-11 11 0 8 8 15 11 22 3-7 11-14 11-22 0-6-4-11-11-11z" fill="#f2567a"/>
              <circle cx="25" cy="11" r="8" fill="#fff"/>
              <text x="25" y="15" text-anchor="middle" font-size="11" font-weight="700" fill="#5c6bc0">IP</text>
            </svg>
            <span>IP Address Lookup</span>
          </a>
          <a href="#" class="tool">
            <svg class="tool-icon" viewBox="0 0 50 50">
              <path d="M26 1h18l5 5v26H26z" fill="#ffdf80" stroke="#111" stroke-width="2"/>
              <text x="37" y="24" text-anchor="middle" font-size="21" font-weight="700" fill="#111">#</text>
              <path d="M11 18 21 2l4 5v12z" fill="#ff8a65" stroke="#111" stroke-width="1.500"/>
              <path d="M1 22h14l8 7v20H1z" fill="#ffdf80" stroke="#111" stroke-width="2"/>
              <text x="12" y="44" text-anchor="middle" font-size="17" font-weight="700" fill="#111">A</text>
              <path d="M33 36v-4a5 5 0 0 1 10 0v4" fill="none" stroke="#111" stroke-width="2"/>
              <rect x="31" y="35" width="14" height="14" fill="#ff8a65" stroke="#111" stroke-width="2"/>
              <circle cx="38" cy="42" r="2" fill="#111"/>
            </svg>
            <span>MD5 Generator</span>
          </a>
          <a href="#" class="tool"><svg class="tool-icon"><use href="#i-pass"/></svg><span>Password Generator</span></a>
          <a href="#" class="tool"><svg class="tool-icon"><use href="#i-b64d"/></svg><span>Base64 Decode</span></a>
          <a href="#" class="tool"><svg class="tool-icon"><use href="#i-b64e"/></svg><span>Base64 Encode</span></a>
        </div>
      </section>

    </main>

    <aside class="side-col">

      <div class="side-card">
        <h3>Popular Tools</h3>
        <a href="#" class="side-item">
          <svg class="side-icon" viewBox="0 0 50 50">
            <rect x="8" y="8" width="35" height="35" fill="url(#g-slug)" stroke="#29b6f6" stroke-width="2.500"/>
            <g fill="#2e7de0"><rect x="5" y="4" width="7" height="7" rx="1.500"/><rect x="39" y="4" width="7" height="7" rx="1.500"/><rect x="5" y="39" width="7" height="7" rx="1.500"/><rect x="39" y="39" width="7" height="7" rx="1.500"/></g>
            <text x="25.500" y="35" text-anchor="middle" font-size="27" font-weight="700" fill="#9c27b0">T</text>
          </svg>
          <span>Text to Slug</span>
        </a>
        <a href="#" class="side-item">
          <svg class="side-icon" viewBox="0 0 50 50">
            <text x="0" y="44" font-size="56" font-weight="700" fill="#9c27b0" textLength="31" lengthAdjust="spacingAndGlyphs">T</text>
            <text x="29" y="44" font-size="36" font-weight="700" fill="#9c27b0" textLength="21" lengthAdjust="spacingAndGlyphs">T</text>
          </svg>
          <span>Case Converter</span>
        </a>
        <a href="#" class="side-item">
          <svg class="side-icon" viewBox="0 0 50 50">
            <path d="M25 0C12 0 5 9 5 19c0 12 13 21 20 28 7-7 20-16 20-28C45 9 38 0 25 0z" fill="#f4511e"/>
            <circle cx="25" cy="19" r="15" fill="#e2f2f7"/>
            <text x="25" y="25" text-anchor="middle" font-size="17" fill="#0e9fc4">IP</text>
            <rect x="6" y="46.500" width="38" height="3.500" fill="#37574f"/>
          </svg>
          <span>Domain to IP</span>
        </a>
        <a href="#" class="side-item">
          <svg class="side-icon" viewBox="0 0 50 50">
            <path d="M7 5h36l-3.300 37L25 47l-14.700-5z" fill="#e65100"/>
            <path d="M25 8h15l-2.800 31.500L25 44z" fill="#ff6d00"/>
            <text x="25" y="38" text-anchor="middle" font-size="35" font-weight="700" fill="#fff">5</text>
          </svg>
          <span>HTML Decode</span>
        </a>
        <a href="#" class="side-item"><svg class="side-icon"><use href="#i-lorem"/></svg><span>Lorem Ipsum Generator</span></a>
      </div>

      <div class="side-card">
        <h3>Recent Posts</h3>
        <a href="#" class="post">
          <span class="post-thumb"><svg class="post-thumb-img"><use href="#i-photo"/></svg></span>
          <span class="post-text">
            <span class="post-title">Torquent nibh ad mal...</span>
            <span class="post-date">Dec 22, 2022</span>
          </span>
        </a>
      </div>

    </aside>
  </div>

  <footer class="footer">
    <a href="#" class="footer-logo"><svg class="footer-logo-img"><use href="#i-photo"/></svg></a>
    <div class="footer-bottom">
      <p>© 2022 Abdelmjid. All Rights Reserved.</p>
      <div class="socials">
        <a href="#"><svg viewBox="2 2 20 20"><path d="M12 2C6.477 2 2 6.477 2 12c0 4.991 3.657 9.128 8.438 9.879V14.89h-2.54V12h2.54V9.797c0-2.506 1.492-3.89 3.777-3.89 1.094 0 2.238.195 2.238.195v2.46h-1.26c-1.243 0-1.63.771-1.63 1.562V12h2.773l-.443 2.89h-2.33v6.989C18.343 21.129 22 16.99 22 12c0-5.523-4.477-10-10-10z"/></svg></a>
        <a href="#"><svg viewBox="1 1 22 22"><path d="M22.162 5.656a8.384 8.384 0 0 1-2.402.658A4.196 4.196 0 0 0 21.6 4c-.82.488-1.719.83-2.656 1.015a4.182 4.182 0 0 0-7.126 3.814 11.874 11.874 0 0 1-8.62-4.37 4.168 4.168 0 0 0-.566 2.103c0 1.45.738 2.731 1.86 3.481a4.168 4.168 0 0 1-1.894-.523v.052a4.185 4.185 0 0 0 3.355 4.101 4.21 4.21 0 0 1-1.89.072A4.185 4.185 0 0 0 7.97 16.65a8.394 8.394 0 0 1-6.191 1.732 11.83 11.83 0 0 0 6.41 1.88c7.693 0 11.9-6.373 11.9-11.9 0-.18-.005-.362-.013-.54a8.496 8.496 0 0 0 2.087-2.165z"/></svg></a>
        <a href="#"><svg viewBox="2 2 20 20"><path d="M21.543 6.498C22 8.28 22 12 22 12s0 3.72-.457 5.502c-.254.985-.997 1.76-1.938 2.022C17.896 20 12 20 12 20s-5.893 0-7.605-.476c-.945-.266-1.687-1.04-1.938-2.022C2 15.72 2 12 2 12s0-3.72.457-5.502c.254-.985.997-1.76 1.938-2.022C6.107 4 12 4 12 4s5.896 0 7.605.476c.945.266 1.687 1.04 1.938 2.022zM10 15.500l6-3.500-6-3.500v7z"/></svg></a>
        <a href="#"><svg viewBox="2.500 2.500 20 20"><path d="M6.940 5a2 2 0 1 1-4-.002 2 2 0 0 1 4 .002zM7 8.480H3V21h4V8.480zm6.320 0H9.340V21h3.940v-6.570c0-3.660 4.770-4 4.770 0V21H22v-7.930c0-6.170-7.060-5.940-8.720-2.910l.040-1.680z"/></svg></a>
      </div>
    </div>
  </footer>

</body>
</html>
```

FILE: styles.css
```css
* {
  box-sizing: border-box;
}

body {
  font-family: "Liberation Sans", Arial, sans-serif;
  background-color: #ffffff;
  color: #111827;
  margin: 0;
  padding: 0;
}

a {
  color: inherit;
  text-decoration: none;
}

.sprite {
  display: block;
  width: 0;
  height: 0;
}

/* Top bar */
.topbar {
  display: flex;
  align-items: center;
  justify-content: space-between;
  height: 96px;
  padding: 0 60px;
  border-bottom: 1px solid #e5e7eb;
  border-radius: 0 0 8px 8px;
}

.logo {
  display: flex;
  align-items: center;
  justify-content: center;
  width: 175px;
  height: 70px;
  background-color: #f3f3f3;
}

.logo-img {
  width: 45px;
  height: 40px;
}

.topnav {
  display: flex;
  gap: 40px;
  font-size: 17.5px;
  color: #374151;
}

.top-actions {
  display: flex;
  align-items: center;
  justify-content: flex-end;
  gap: 30px;
  width: 104px;
}

.moon {
  width: 20px;
  height: 20px;
  fill: #6b7280;
}

.avatar {
  width: 40px;
  height: 40px;
}

/* Page columns */
.page {
  display: flex;
  align-items: flex-start;
  gap: 41px;
  padding: 60px 40px 0;
}

.main-col {
  display: flex;
  flex-direction: column;
  gap: 59.75px;
  width: 1370px;
}

.side-col {
  display: flex;
  flex-direction: column;
  gap: 31px;
  width: 429px;
}

/* Tool sections */
.tool-section {
  background-color: #ffffff;
  border: 1px solid #e5e7eb;
  border-radius: 16px;
  box-shadow: 0 10px 15px -3px rgba(0, 0, 0, 0.1), 0 4px 6px -4px rgba(0, 0, 0, 0.1);
  overflow: hidden;
}

.section-head {
  height: 121px;
  padding: 20px 41px 0;
  background-color: #1f2937;
}

.section-head-plain {
  height: 89px;
}

.section-head h2 {
  margin: 0;
  font-size: 29px;
  line-height: 40px;
  font-weight: 700;
  color: #ffffff;
}

.section-head p {
  margin: 12px 0 0;
  font-size: 20px;
  line-height: 28px;
  letter-spacing: 0.18px;
  color: #9ca3af;
}

.tool-grid {
  display: grid;
  grid-template-columns: repeat(3, 1fr);
  gap: 29.75px 32px;
  padding: 40px 41px;
}

.tool {
  display: flex;
  align-items: center;
  height: 80px;
  padding: 0 29px;
  background-color: #ffffff;
  border: 1px solid #e5e7eb;
  border-radius: 12px;
  box-shadow: 0 4px 6px -1px rgba(0, 0, 0, 0.1), 0 2px 4px -2px rgba(0, 0, 0, 0.1);
  font-size: 20px;
}

.tool-icon {
  flex: none;
  width: 50px;
  height: 50px;
  margin-right: 16px;
  overflow: visible;
}

/* Sidebar */
.side-card {
  padding: 41px 40px;
  background-color: #ffffff;
  border: 1px solid #e5e7eb;
  border-radius: 16px;
  box-shadow: 0 10px 15px -3px rgba(0, 0, 0, 0.1), 0 4px 6px -4px rgba(0, 0, 0, 0.1);
}

.side-card h3 {
  margin: 0 0 22px;
  font-size: 25px;
  line-height: 24px;
  font-weight: 700;
}

.side-item {
  display: flex;
  align-items: center;
  height: 71px;
  border-bottom: 1px solid #e5e7eb;
  font-size: 17.6px;
  color: #1f2937;
}

.side-item:last-child {
  height: 69px;
  padding-top: 2px;
  border-bottom: none;
}

.side-icon {
  flex: none;
  width: 40px;
  height: 40px;
  margin-right: 20px;
  overflow: visible;
}

.post {
  display: flex;
  align-items: center;
  padding: 16px 0 15px;
}

.post-thumb {
  display: flex;
  flex: none;
  align-items: center;
  justify-content: center;
  width: 40px;
  height: 40px;
  margin-right: 20px;
  background-color: #f3f3f3;
  border-radius: 50%;
}

.post-thumb-img {
  width: 11px;
  height: 10px;
}

.post-text {
  display: flex;
  flex-direction: column;
  font-size: 17.6px;
  line-height: 25px;
}

.post-title {
  color: #1f2937;
}

.post-date {
  color: #6b7280;
}

/* Footer */
.footer {
  padding: 100px 40px 0;
}

.footer-logo {
  display: flex;
  align-items: center;
  justify-content: center;
  width: 100px;
  height: 40px;
  background-color: #f3f3f3;
}

.footer-logo-img {
  width: 26px;
  height: 23px;
}

.footer-bottom {
  margin-top: 41px;
  padding-top: 40px;
  border-top: 1px solid #e5e7eb;
  text-align: center;
}

.footer-bottom p {
  margin: 0;
  font-size: 18px;
  line-height: 24px;
  color: #6b7280;
}

.socials {
  display: flex;
  justify-content: center;
  gap: 25px;
  margin-top: 24px;
}

.socials a {
  display: block;
  width: 25px;
  height: 25px;
}

.socials svg {
  display: block;
  width: 25px;
  height: 25px;
  fill: #6b7280;
}
```
